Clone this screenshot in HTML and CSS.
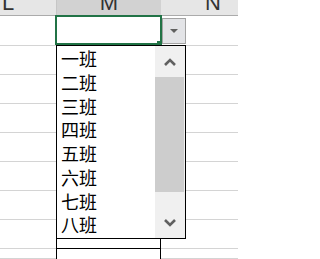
FILE: index.html
```html
<!DOCTYPE html>
<html lang="zh-CN">
<head>
<meta charset="utf-8">
<title>Excel 下拉列表</title>
<link rel="stylesheet" href="styles.css">
</head>
<body>
<div class="sheet">
  <div class="hc col-l"><span>L</span></div>
  <div class="hc col-m sel"><span>M</span></div>
  <div class="hc col-n"><span>N</span></div>

  <div class="c cl"></div><div class="c cm"></div><div class="c cn"></div>
  <div class="c cl"></div><div class="c cm"></div><div class="c cn"></div>
  <div class="c cl"></div><div class="c cm"></div><div class="c cn"></div>
  <div class="c cl"></div><div class="c cm"></div><div class="c cn"></div>
  <div class="c cl"></div><div class="c cm"></div><div class="c cn"></div>
  <div class="c cl"></div><div class="c cm"></div><div class="c cn"></div>
  <div class="c cl"></div><div class="c cm"></div><div class="c cn"></div>
  <div class="c cl"></div><div class="c cm"></div><div class="c cn"></div>
  <div class="c cl"></div><div class="c cm"></div><div class="c cn"></div>

  <div class="selection"></div>
  <div class="handle"></div>
  <div class="ddbtn"><span class="tri"></span></div>

  <div class="ghost"></div>

  <div class="list">
    <ul class="items">
      <li>一班</li>
      <li>二班</li>
      <li>三班</li>
      <li>四班</li>
      <li>五班</li>
      <li>六班</li>
      <li>七班</li>
      <li>八班</li>
    </ul>
    <div class="scroll">
      <div class="sbtn">
        <svg width="12" height="8" viewBox="0 0 12 8"><polyline points="1,7 6,2 11,7" fill="none" stroke="#606060" stroke-width="2.6"/></svg>
      </div>
      <div class="track"><div class="thumb"></div></div>
      <div class="sbtn">
        <svg width="12" height="8" viewBox="0 0 12 8"><polyline points="1,1 6,6 11,1" fill="none" stroke="#606060" stroke-width="2.6"/></svg>
      </div>
    </div>
  </div>
</div>
</body>
</html>
```
FILE: styles.css
```css
* { box-sizing: border-box; }
html, body { margin: 0; padding: 0; background: #fff; }

.sheet {
  position: relative;
  width: 238px;
  height: 259px;
  overflow: hidden;
  display: grid;
  grid-template-columns: 57px 104px 104px;
  grid-template-rows: 16px 30px repeat(7, 29px) 1fr;
  background: #fff;
}

.hc {
  background: #e6e6e6;
  border-bottom: 1px solid #ababab;
  display: flex;
  align-items: flex-end;
  justify-content: center;
  overflow: hidden;
  font-family: "Liberation Sans", Arial, sans-serif;
  font-size: 22px;
  color: #333;
}
.hc span { line-height: 22px; margin-bottom: 1px; }
.hc.col-l { justify-content: flex-start; padding-left: 2px; border-right: 1px solid #c6c6c6; }
.hc.col-m { background: #d2d2d2; }

.c { border-bottom: 1px solid #d4d4d4; }
.c.cl, .c.cm { border-right: 1px solid #d4d4d4; }

.selection {
  position: absolute;
  left: 55px;
  top: 15px;
  width: 107px;
  height: 30px;
  border: 2px solid #217346;
}
.handle {
  position: absolute;
  left: 157px;
  top: 41px;
  width: 5px;
  height: 5px;
  background: #217346;
}

.ddbtn {
  position: absolute;
  left: 162px;
  top: 18px;
  width: 24px;
  height: 26px;
  background: #e3e4e7;
  border: 1px solid #a3a3a3;
  display: flex;
  align-items: center;
  justify-content: center;
}
.tri {
  width: 0;
  height: 0;
  border-left: 4px solid transparent;
  border-right: 4px solid transparent;
  border-top: 4px solid #606060;
}

.ghost {
  position: absolute;
  left: 56px;
  top: 237px;
  width: 105px;
  height: 40px;
  border-left: 1px solid #000;
  border-right: 1px solid #000;
  background: linear-gradient(#000, #000) 0 11px / 100% 1px no-repeat, #fff;
}

.list {
  position: absolute;
  left: 56px;
  top: 45px;
  width: 130px;
  height: 194px;
  border: 1px solid #000;
  background: #fff;
  display: flex;
}
.items {
  flex: 1;
  margin: 0;
  padding: 1px 0 0 4px;
  list-style: none;
  font-family: "Noto Sans CJK SC", "Noto Sans", sans-serif;
  font-size: 18px;
  color: #000;
}
.items li { height: 23.75px; line-height: 23.75px; }

.scroll {
  width: 30px;
  background: #f0f0f0;
  display: flex;
  flex-direction: column;
}
.sbtn {
  height: 31px;
  display: flex;
  align-items: center;
  justify-content: center;
}
.track { flex: 1; }
.thumb {
  height: 115px;
  margin-right: 1px;
  background: #cdcdcd;
}
```
